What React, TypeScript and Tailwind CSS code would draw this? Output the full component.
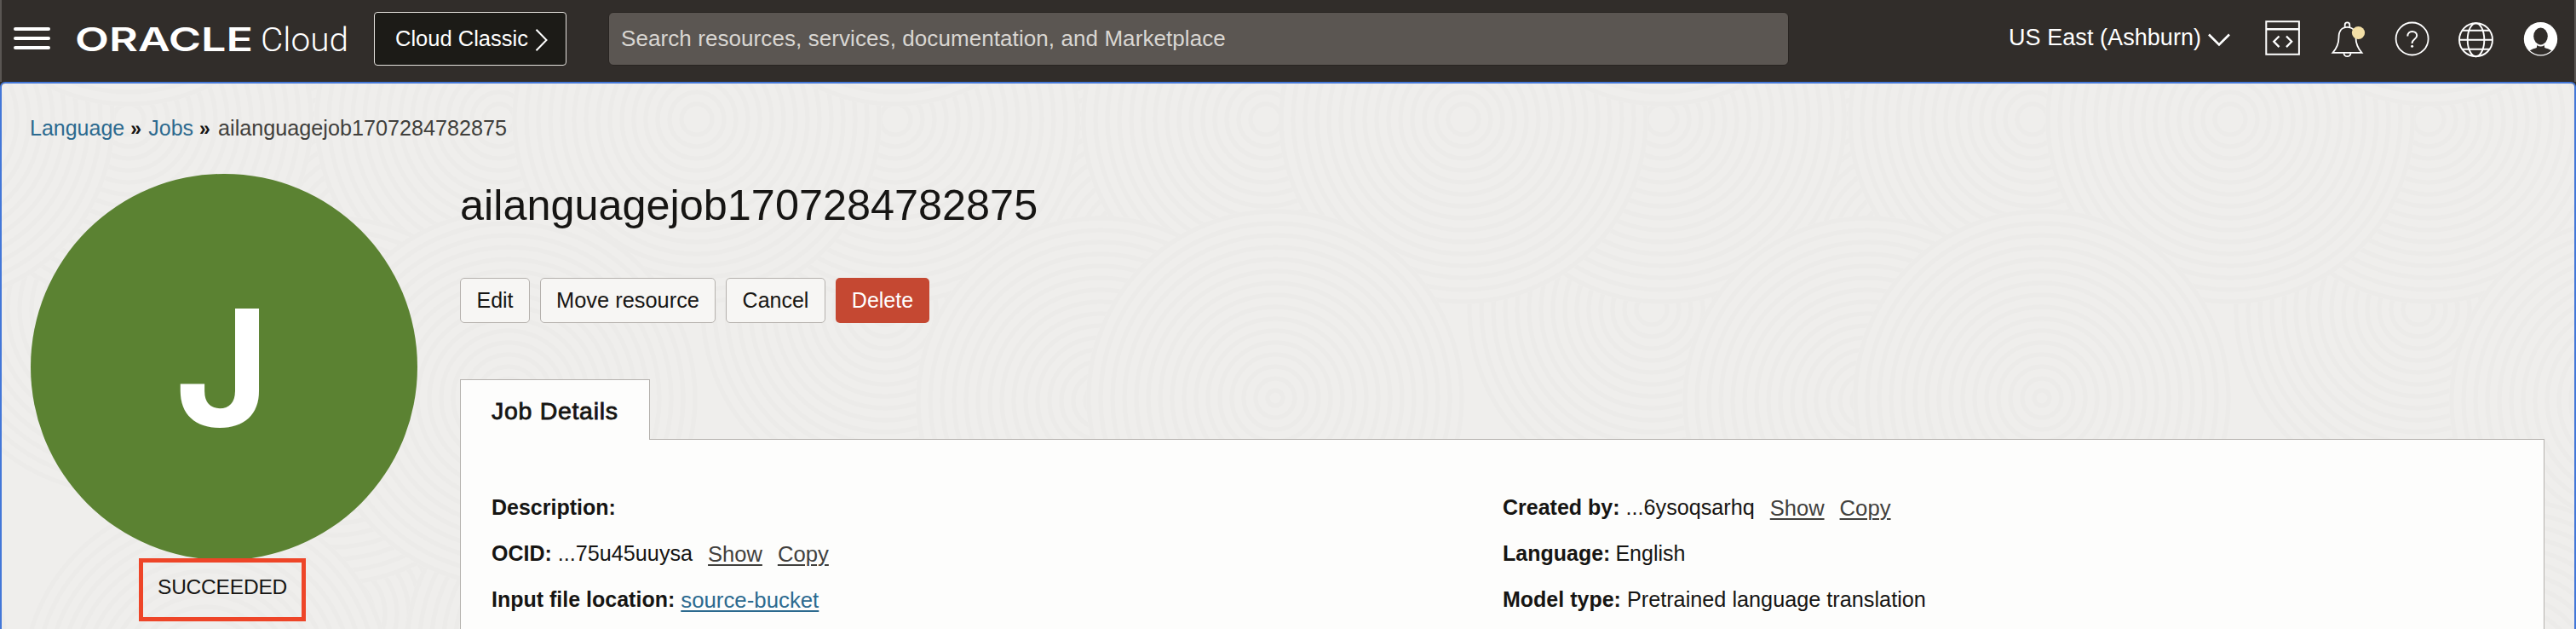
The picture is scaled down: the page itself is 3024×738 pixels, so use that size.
import React from "react";

const TILE = 900;

type Disc = { x: number; y: number; r?: number };

// Painted in order, later discs cover earlier ones.
const DISCS: Disc[] = [
  { x: 390, y: 720 },
  { x: 690, y: 760 },
  { x: 480, y: 160 },
  { x: 450, y: 300 },
  { x: 137, y: 363 },
  { x: 149, y: 140 },
  { x: 584, y: 140 },
  { x: 816, y: 140 },
  { x: 149, y: -92 },
  { x: 390, y: 470 },
  { x: 595, y: 467, r: 222 },
  { x: 240, y: 800 },
];

function Rings({ x, y, r = 217 }: Disc) {
  const radii: number[] = [];
  for (let v = r; v > 10; v -= 14) radii.push(v);
  return (
    <>
      <circle cx={x} cy={y} r={r} fill="#efeeec" />
      {radii.map((v) => (
        <circle key={v} cx={x} cy={y} r={v - 3} fill="none" stroke="#ecebe9" strokeWidth={5} />
      ))}
    </>
  );
}

function Texture() {
  return (
    <svg className="absolute inset-0 h-full w-full" aria-hidden="true">
      <defs>
        <pattern id="rings" width={TILE} height={900} y={-98} patternUnits="userSpaceOnUse">
          <rect width={TILE} height={900} fill="#efeeec" />
          {DISCS.map((d, i) => (
            <g key={i}>
              {[-TILE, 0, TILE].map((o) => (
                <Rings key={o} x={d.x + o} y={d.y} r={d.r} />
              ))}
            </g>
          ))}
        </pattern>
      </defs>
      <rect width="100%" height="100%" fill="url(#rings)" />
    </svg>
  );
}

function Logo() {
  return (
    <svg width="332" height="60" viewBox="-3 -10 332 60" className="ml-[26px] mt-[16px] shrink-0" fill="#fff">
      <text x="0" y="33.7" fontFamily="Inter, 'Liberation Sans', sans-serif" fontWeight={600} fontSize="38" textLength="209" lengthAdjust="spacingAndGlyphs">
        ORACLE
      </text>
      <text x="218" y="33.7" fontFamily="Roboto, 'Liberation Sans', sans-serif" fontWeight={300} fontSize="39.5" textLength="103" lengthAdjust="spacingAndGlyphs">
        Cloud
      </text>
    </svg>
  );
}

function HeaderIcons() {
  return (
    <svg width="360" height="60" viewBox="2650 16 360 60" className="ml-[33px] mt-[16px] shrink-0" fill="none" stroke="#fff" strokeWidth={2}>
      <g>
        <path d="M2660.3 25.3h38.6v38.4h-38.6z" />
        <path d="M2660 34.2h39" strokeWidth={2.4} />
        <path d="M2675.5 42.5l-6.2 6.3 6.2 6.3M2684 42.5l6.2 6.3-6.2 6.3" strokeWidth={2.3} />
      </g>
      <g strokeWidth={1.8}>
        <path d="M2738.5 61.8c4-4.5 7-10.5 7-17.8 0-7.5 3.5-12.2 10-12.2s10 4.7 10 12.2c0 7.3 3 13.3 7 17.8z" />
        <path d="M2752.7 32v-2.800a2.800 2.800 0 0 1 5.600 0V32" />
        <path d="M2751.5 62.200a4 4 0 0 0 8 0" />
        <circle cx="2768.5" cy="38.5" r="7.6" fill="#f3dfa6" stroke="none" />
      </g>
      <g strokeWidth={1.8}>
        <circle cx="2831.6" cy="45.5" r="19" />
        <path d="M2826.3 42.500c0-3.500 2.300-5.600 5.400-5.600 3.200 0 5.500 2 5.500 4.900 0 4.200-5.600 4.300-5.600 8.700v.5" strokeWidth={2} />
        <circle cx="2831.6" cy="54.3" r="1.5" fill="#fff" stroke="none" />
      </g>
      <g strokeWidth={1.9}>
        <circle cx="2906.5" cy="46.7" r="19.5" />
        <ellipse cx="2906.5" cy="46.7" rx="9.8" ry="19.5" />
        <path d="M2887 46.700h39M2891 35.700h31M2891 57.700h31" />
      </g>
      <g stroke="none">
        <circle cx="2982.5" cy="45.7" r="19.7" fill="#fff" />
        <ellipse cx="2982.5" cy="42.5" rx="8.3" ry="10" fill="#312d2a" />
        <path d="M2969.8 59.300c2.600-1.600 5.400-2.500 8-3.300l.6-3.400h8.200l.6 3.400c2.600.8 5.400 1.700 8 3.300a18.500 18.500 0 0 1-25.400 0z" fill="#312d2a" />
        <path d="M2978.6 52.200c2.600 1.800 5.200 1.800 7.800 0" fill="none" stroke="#fff" strokeWidth={1.8} />
      </g>
    </svg>
  );
}

function Header() {
  return (
    <header className="flex h-24 items-start border-x-2 border-[#5a5653] bg-[#312d2a] text-white">
      <div className="ml-[14px] mt-8 flex w-[43px] shrink-0 flex-col gap-[7px]">
        <span className="h-1 rounded-full bg-white" />
        <span className="h-1 rounded-full bg-white" />
        <span className="h-1 rounded-full bg-white" />
      </div>
      <Logo />
      <button className="ml-[22px] mt-[14px] flex h-[63px] w-[226px] shrink-0 items-center rounded border border-[#e4e1dd] bg-[#1c1b17] pl-6 text-[25.5px] text-white">
        Cloud Classic
        <svg width="16" height="28" viewBox="0 0 16 28" className="ml-2 mt-[2px]" fill="none" stroke="#fff" strokeWidth={2}>
          <path d="M1.500 1.800L13.500 14 1.500 26.200" />
        </svg>
      </button>
      <div className="ml-[49px] mt-[14px] flex h-[63px] w-[1386px] shrink-0 items-center rounded-md border border-[#282421] bg-[#5b5652] pl-[14px] text-[26px] tracking-[0.08px] text-[#d9d6d2]">
        Search resources, services, documentation, and Marketplace
      </div>
      <div className="ml-[258px] mt-[24px] flex h-10 w-[259px] shrink-0 items-center whitespace-nowrap text-[27px] tracking-[0.06px]">
        US East (Ashburn)
        <svg width="26" height="16" viewBox="0 0 26 16" className="ml-[8px] mt-[6px] shrink-0" fill="none" stroke="#fff" strokeWidth={2.6}>
          <path d="M1 1.500l12 12 12-12" />
        </svg>
      </div>
      <HeaderIcons />
    </header>
  );
}

function Row({ label, children }: { label: string; children?: React.ReactNode }) {
  return (
    <div className="flex h-[54px] items-center whitespace-pre">
      <span className="font-bold">{label}</span>
      {children}
    </div>
  );
}

function MaskedValue({ value }: { value: string }) {
  return (
    <>
      <span className="ml-[7px] text-[25.2px]">{value}</span>
      <a className="ml-[18px] text-[25.5px] text-[#41403d] underline decoration-2 underline-offset-[3px]">Show</a>
      <a className="ml-[18px] text-[25.7px] text-[#41403d] underline decoration-2 underline-offset-[3px]">Copy</a>
    </>
  );
}

const BUTTON = "flex h-[53px] items-center justify-center rounded-[5px] border border-[#b5b1ad] bg-[#f7f6f4]";

export default function App() {
  return (
    <div className="flex h-[738px] w-[3024px] flex-col overflow-hidden bg-[#312d2a] font-['Liberation_Sans',Arial,sans-serif] text-[25px] text-[#161513]">
      <Header />
      <main className="relative h-[642px] overflow-hidden rounded-t-md border-x-2 border-t-2 border-[#4377d8]">
        <Texture />
        <div className="relative flex h-full flex-col">
          <nav className="ml-[33px] mt-[33px] flex h-10 items-center whitespace-nowrap text-[#403f3c]">
            <a className="text-[#2c6a8f]">Language</a>
            <span className="ml-[7px] w-[21px] text-[23px] font-bold text-[#161513]">»</span>
            <a className="text-[#2c6a8f]">Jobs</a>
            <span className="ml-[7px] w-[22px] text-[23px] font-bold text-[#161513]">»</span>
            <span className="text-[25.2px]">ailanguagejob1707284782875</span>
          </nav>

          <div className="flex grow">
            <aside className="ml-[34px] mt-[33px] flex w-[454px] flex-col items-center">
              <div className="flex h-[453px] w-[454px] shrink-0 items-center justify-center rounded-full bg-[#5b8232] pr-[4px] font-['Inter','Liberation_Sans',sans-serif] text-[190px] leading-none font-bold text-white">
                J
              </div>
              <div className="relative -mt-[2px] mr-[4px] flex h-[74px] w-[196px] shrink-0 items-center justify-center border-[5px] border-[#ee4528] pb-[6px] text-[24.5px] tracking-[-0.2px]">
                SUCCEEDED
              </div>
            </aside>

            <section className="ml-[50px] flex w-[2447px] flex-col">
              <h1 className="mt-[40px] h-[60px] text-[50.4px] leading-[60px]">ailanguagejob1707284782875</h1>
              <div className="mt-[55px] flex gap-3">
                <button className={`${BUTTON} w-[82px]`}>Edit</button>
                <button className={`${BUTTON} w-[206px] text-[25.4px]`}>Move resource</button>
                <button className={`${BUTTON} w-[117px]`}>Cancel</button>
                <button className="flex h-[53px] w-[110px] items-center justify-center rounded-[5px] bg-[#c54832] text-white">Delete</button>
              </div>
              <div className="relative z-10 mt-[66px] -mb-px flex h-[71px] w-[223px] items-center border-x border-t border-[#b5b2ae] bg-[#fdfdfc] pt-[2px] pl-9 text-[28.5px] tracking-[0.7px] [-webkit-text-stroke:0.8px_#161513]">
                Job Details
              </div>
              <div className="flex grow border border-b-0 border-[#b5b2ae] bg-[#fdfdfc] pt-[53px] pl-9">
                <div className="w-[1187px]">
                  <Row label="Description:" />
                  <Row label="OCID:">
                    <MaskedValue value="...75u45uuysa" />
                  </Row>
                  <Row label="Input file location:">
                    <a className="ml-[7px] text-[25.8px] text-[#2c6a8f] underline decoration-2 underline-offset-[3px]">source-bucket</a>
                  </Row>
                </div>
                <div>
                  <Row label="Created by:">
                    <MaskedValue value="...6ysoqsarhq" />
                  </Row>
                  <Row label="Language:">
                    <span className="ml-[6px]">English</span>
                  </Row>
                  <Row label="Model type:">
                    <span className="ml-[7px] text-[25.25px]">Pretrained language translation</span>
                  </Row>
                </div>
              </div>
            </section>
          </div>
        </div>
      </main>
    </div>
  );
}
